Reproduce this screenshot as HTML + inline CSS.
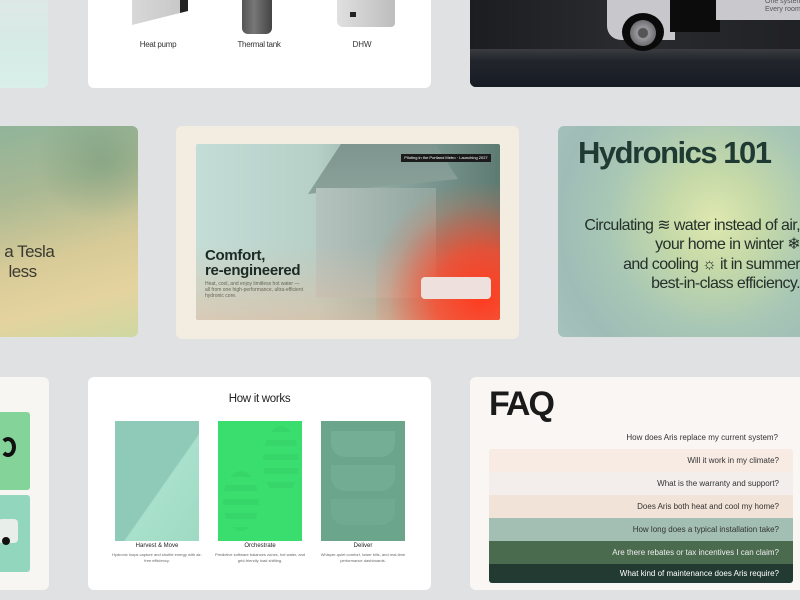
<!DOCTYPE html>
<html><head><meta charset="utf-8"><style>
*{margin:0;padding:0;box-sizing:border-box}
body{width:800px;height:600px;overflow:hidden;background:#e0e1e3;position:relative;font-family:"Liberation Sans",sans-serif}
.a{position:absolute}
.card{position:absolute;border-radius:6px;overflow:hidden}
</style></head><body>

<div class="card" style="left:-10px;top:-10px;width:58px;height:98px;background:linear-gradient(180deg,#dfe8e6,#d6ebe6 60%,#d9efe9)"></div>

<div class="card" style="left:88px;top:-10px;width:343px;height:98px;background:#fff">
  <div class="a" style="left:44px;top:0;width:56px;height:28px;background:linear-gradient(90deg,#d8d8d8,#c8c8c8);transform:skewY(-14deg);border-right:8px solid #222"></div>
  <div class="a" style="left:154px;top:0;width:30px;height:44px;background:linear-gradient(90deg,#555,#777 40%,#444);border-radius:0 0 6px 6px"></div>
  <div class="a" style="left:249px;top:0;width:58px;height:37px;background:linear-gradient(90deg,#e0e0e0,#bdbdbd);border-radius:0 0 4px 6px"></div>
  <div class="a" style="left:262px;top:22px;width:6px;height:5px;background:#222"></div>
  <div class="a" style="left:40px;top:50px;width:60px;text-align:center;font-size:8px;color:#333;letter-spacing:-0.3px">Heat pump</div>
  <div class="a" style="left:140px;top:50px;width:62px;text-align:center;font-size:8px;color:#333;letter-spacing:-0.3px">Thermal tank</div>
  <div class="a" style="left:244px;top:50px;width:60px;text-align:center;font-size:8px;color:#333">DHW</div>
</div>

<div class="card" style="left:470px;top:-10px;width:340px;height:97px;background:linear-gradient(90deg,#1c1d20,#2a2b2e 45%,#202124)">
  <div class="a" style="left:0;top:59px;width:340px;height:38px;background:linear-gradient(180deg,#3a3c41,#22252b 30%,#161b24)"></div>
  <div class="a" style="left:137px;top:0;width:68px;height:50px;background:#c7c7cc;border-radius:0 0 0 14px"></div>
  <div class="a" style="left:200px;top:0;width:50px;height:42px;background:#0c0c0d"></div>
  <div class="a" style="left:246px;top:0;width:94px;height:30px;background:#c9c9cd"></div>
  <div class="a" style="left:152px;top:23px;width:42px;height:38px;border-radius:50%;background:#0a0a0a"></div>
  <div class="a" style="left:160px;top:30px;width:26px;height:26px;border-radius:50%;background:radial-gradient(circle,#555 25%,#9a9a9e 30%,#6e6e72 70%,#222 75%)"></div>
  <div class="a" style="left:295px;top:8px;font-size:7px;color:#555;line-height:8px">One system.<br>Every room.</div>
</div>

<div class="card" style="left:-10px;top:126px;width:148px;height:211px;background:linear-gradient(165deg,#8fb49a 0%,#a9b893 30%,#d8cb98 60%,#e4d39e 80%,#cfd8a2)">
  <div class="a" style="left:40px;top:-10px;width:120px;height:110px;background:radial-gradient(ellipse at 60% 40%,rgba(110,150,120,.5),transparent 65%)"></div>
  <div class="a" style="left:10px;top:116px;font-size:17px;color:#3a3a30;line-height:20px;letter-spacing:-0.5px;white-space:nowrap">&nbsp;a Tesla<br>&nbsp;&nbsp;less</div>
</div>

<div class="card" style="left:176px;top:126px;width:343px;height:213px;background:#f3ece1">
  <div class="a" style="left:20px;top:18px;width:304px;height:176px;border-radius:2px;overflow:hidden;background:linear-gradient(90deg,#c4ddd6 0%,#b6cfc7 40%,#8aa59d 65%,#5d7b73 100%)">
    <div class="a" style="left:112px;top:0;width:150px;height:50px;background:linear-gradient(180deg,#7d958e,#8aa29a);clip-path:polygon(22% 0,85% 0,100% 70%,0 100%)"></div>
    <div class="a" style="left:120px;top:44px;width:120px;height:110px;background:linear-gradient(90deg,#b5c3be,#90a59e)"></div>
    <div class="a" style="left:0;top:100px;width:304px;height:76px;background:linear-gradient(180deg,transparent,rgba(230,190,160,.6))"></div>
    <div class="a" style="left:180px;top:40px;width:140px;height:140px;background:radial-gradient(circle at 75% 80%,#ff3b1f 0%,rgba(255,70,40,.8) 30%,rgba(255,100,60,.2) 60%,transparent 75%)"></div>
    <div class="a" style="left:225px;top:133px;width:70px;height:22px;background:#eee0dc;border-radius:4px"></div>
    <div class="a" style="left:205px;top:10px;height:8px;width:90px;background:#1b1b1b;color:#fff;font-size:4px;line-height:8px;text-align:center">Piloting in the Portland Metro · Launching 2027</div>
    <div class="a" style="left:9px;top:104px;font-size:15px;font-weight:bold;color:#1c2a26;line-height:15px;letter-spacing:-0.3px">Comfort,<br>re-engineered</div>
    <div class="a" style="left:9px;top:137px;font-size:5px;color:#665;line-height:6px;width:100px">Heat, cool, and enjoy limitless hot water — all from one high-performance, ultra-efficient hydronic core.</div>
  </div>
</div>

<div class="card" style="left:558px;top:126px;width:252px;height:211px;background:radial-gradient(circle at 62% 45%,#dfe8b0 0%,#c5d9a8 25%,#a8c7b5 55%,#9fbdb6 80%,#a5c2bc)">
  <div class="a" style="left:20px;top:9px;font-size:31px;font-weight:bold;color:#1e3a33;letter-spacing:-1.5px;white-space:nowrap">Hydronics 101</div>
  <div class="a" style="left:0;top:90px;width:242px;text-align:right;font-size:16px;color:#24302a;line-height:19.3px;letter-spacing:-0.6px;white-space:nowrap">Circulating ≋ water instead of air,<br>your home in winter ❄<br>and cooling ☼ it in summer<br>best-in-class efficiency.</div>
</div>

<div class="card" style="left:-10px;top:377px;width:59px;height:213px;background:#f8f6f3">
  <div class="a" style="left:0;top:35px;width:40px;height:78px;background:#84d49a;border-radius:3px"></div>
  <div class="a" style="left:0;top:118px;width:40px;height:77px;background:#91d6bd;border-radius:3px"></div>
  <div class="a" style="left:10px;top:60px;width:16px;height:20px;border:4px solid #111;border-radius:50%;border-left-color:transparent"></div>
  <div class="a" style="left:8px;top:142px;width:20px;height:24px;background:#e8eee9;border-radius:4px"></div>
  <div class="a" style="left:12px;top:160px;width:8px;height:8px;background:#111;border-radius:50%"></div>
</div>

<div class="card" style="left:88px;top:377px;width:343px;height:213px;background:#fff">
  <div class="a" style="left:0;top:16px;width:343px;text-align:center;font-size:11.5px;color:#222;letter-spacing:-0.3px">How it works</div>
  <div class="a" style="left:27px;top:44px;width:84px;height:120px;background:linear-gradient(125deg,#8ecab7 0%,#8fcab8 55%,#a8e0cc 56%,#9fdac4 100%)"></div>
  <div class="a" style="left:130px;top:44px;width:84px;height:120px;background:#3ade6e">
    <div class="a" style="left:45px;top:5px;width:36px;height:70px;background:repeating-linear-gradient(180deg,rgba(40,180,90,.18) 0 6px,transparent 6px 14px);border-radius:50%"></div>
    <div class="a" style="left:5px;top:50px;width:36px;height:60px;background:repeating-linear-gradient(180deg,rgba(40,180,90,.18) 0 6px,transparent 6px 14px);border-radius:50%"></div>
  </div>
  <div class="a" style="left:233px;top:44px;width:84px;height:120px;background:#6ba58c">
    <div class="a" style="left:10px;top:10px;width:64px;height:26px;background:#74ae94;border-radius:0 0 14px 14px"></div>
    <div class="a" style="left:10px;top:44px;width:64px;height:26px;background:#72ac92;border-radius:0 0 14px 14px"></div>
    <div class="a" style="left:10px;top:78px;width:64px;height:26px;background:#70aa90;border-radius:0 0 14px 14px"></div>
  </div>
  <div class="a" style="left:27px;top:166px;width:84px;text-align:center;font-size:6px;color:#222">Harvest &amp; Move</div>
  <div class="a" style="left:130px;top:166px;width:84px;text-align:center;font-size:6px;color:#222">Orchestrate</div>
  <div class="a" style="left:233px;top:166px;width:84px;text-align:center;font-size:6px;color:#222">Deliver</div>
  <div class="a" style="left:22px;top:175px;width:94px;text-align:center;font-size:4px;color:#666;line-height:6px">Hydronic loops capture and shuttle energy with air-free efficiency.</div>
  <div class="a" style="left:125px;top:175px;width:94px;text-align:center;font-size:4px;color:#666;line-height:6px">Predictive software balances zones, hot water, and grid-friendly load shifting.</div>
  <div class="a" style="left:228px;top:175px;width:94px;text-align:center;font-size:4px;color:#666;line-height:6px">Whisper-quiet comfort, lower bills, and real-time performance dashboards.</div>
</div>

<div class="card" style="left:470px;top:377px;width:340px;height:213px;background:#faf6f3">
  <div class="a" style="left:19px;top:8px;font-size:34px;font-weight:bold;color:#1a1a1a;letter-spacing:-2px">FAQ</div>
  <div class="a" style="left:19px;top:52px;width:290px;text-align:right;font-size:8px;color:#333;line-height:18px;padding-right:1px">How does Aris replace my current system?</div>
  <div class="a" style="left:19px;top:72px;width:304px;height:134px;border-radius:3px;overflow:hidden;font-size:8px;text-align:right;line-height:23px">
    <div style="background:#f8ebe4;height:23px;padding-right:14px;color:#333">Will it work in my climate?</div>
    <div style="background:#f3eeeb;height:23px;padding-right:14px;color:#333">What is the warranty and support?</div>
    <div style="background:#f2e3d8;height:23px;padding-right:14px;color:#333">Does Aris both heat and cool my home?</div>
    <div style="background:#a3bfb4;height:23px;padding-right:14px;color:#333">How long does a typical installation take?</div>
    <div style="background:#4a6b4e;height:23px;padding-right:14px;color:#eee">Are there rebates or tax incentives I can claim?</div>
    <div style="background:#233a33;height:19px;line-height:19px;padding-right:14px;color:#fff">What kind of maintenance does Aris require?</div>
  </div>
</div>

</body></html>
